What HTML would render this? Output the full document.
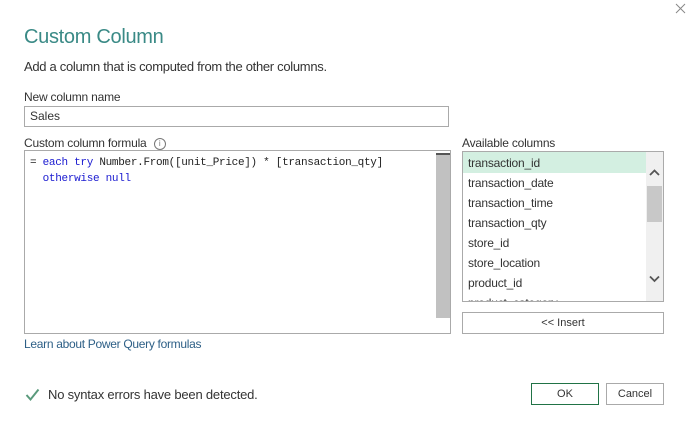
<html><head><style>
body{margin:0;width:687px;height:430px;background:#fff;font-family:"Liberation Sans",sans-serif;position:relative;overflow:hidden;color:#333}
.a{position:absolute}
.lbl{font-size:12px;color:#333;letter-spacing:-0.2px}
</style></head><body>
<svg class="a" style="left:675px;top:3px" width="12" height="12"><path d="M1 1L10 10M10 1L1 10" stroke="#888" stroke-width="1"/></svg>
<div class="a" style="left:24px;top:26px;font-size:20px;color:#3a8a86;letter-spacing:-0.3px">Custom Column</div>
<div class="a" style="left:24px;top:59px;font-size:13px;color:#333;letter-spacing:-0.3px">Add a column that is computed from the other columns.</div>
<div class="a lbl" style="left:24px;top:90px">New column name</div>
<div class="a" style="left:24px;top:106px;font-size:12px;line-height:19px;padding-left:5px;box-sizing:border-box;width:425px;height:21px;border:1px solid #aaa">Sales</div>
<div class="a lbl" style="left:24px;top:136px">Custom column formula <span style="display:inline-block;margin-left:4px;width:10px;height:10px;border:1px solid #777;border-radius:50%;font-size:8px;line-height:10px;text-align:center;color:#777;vertical-align:middle">i</span></div>
<div class="a" style="left:24px;top:150px;width:427px;height:184px;border:1px solid #aaa;box-sizing:border-box"></div>
<div class="a" style="left:436px;top:153px;width:14px;height:165px;background:#c1c1c1;border-top:2px solid #555;box-sizing:border-box"></div>
<div class="a" style="left:30px;top:155px;font-family:'Liberation Mono',monospace;font-size:11px;line-height:16px;color:#222;white-space:pre;letter-spacing:-0.3px">= <span style="color:#1a1ad0">each try</span> Number.From([unit_Price]) * [transaction_qty]
  <span style="color:#1a1ad0">otherwise null</span></div>
<div class="a lbl" style="left:462px;top:136px">Available columns</div>
<div class="a" style="left:462px;top:151px;width:202px;height:151px;border:1px solid #aaa;box-sizing:border-box;overflow:hidden;font-size:12px">
<div style="position:absolute;left:0;top:0;width:184px;height:21px;background:#d3efe1"></div>
<div style="position:absolute;right:0;top:0;width:17px;height:149px;background:#f0f0f0"></div>
<div style="position:absolute;right:1px;top:34px;width:15px;height:36px;background:#c8c8c8"></div>
<svg style="position:absolute;right:3px;top:17px" width="11" height="8"><path d="M1 6L5.5 1.5L10 6" stroke="#555" stroke-width="1.8" fill="none"/></svg>
<svg style="position:absolute;right:3px;top:123px" width="11" height="8"><path d="M1 1.5L5.5 6L10 1.5" stroke="#555" stroke-width="1.8" fill="none"/></svg>
<div style="position:absolute;left:5px;top:1px;line-height:20px;color:#333;letter-spacing:-0.2px">transaction_id<br>transaction_date<br>transaction_time<br>transaction_qty<br>store_id<br>store_location<br>product_id<br>product_category</div>
</div>
<div class="a" style="left:462px;top:312px;width:202px;height:22px;border:1px solid #aaa;box-sizing:border-box;font-size:11px;text-align:center;line-height:20px">&lt;&lt; Insert</div>
<div class="a" style="left:24px;top:337px;font-size:12px;color:#2d5f86;letter-spacing:-0.3px">Learn about Power Query formulas</div>
<svg class="a" style="left:25px;top:388px" width="15" height="14"><path d="M1.5 7L5.5 11.5L13.5 1.5" stroke="#5a9a7c" stroke-width="2" fill="none"/></svg>
<div class="a" style="left:48px;top:387px;font-size:13px;color:#333;letter-spacing:-0.2px">No syntax errors have been detected.</div>
<div class="a" style="left:531px;top:383px;width:68px;height:22px;border:1px solid #217346;box-sizing:border-box;font-size:11px;text-align:center;line-height:20px">OK</div>
<div class="a" style="left:606px;top:383px;width:58px;height:22px;border:1px solid #aaa;box-sizing:border-box;font-size:11px;text-align:center;line-height:20px">Cancel</div>
</body></html>
